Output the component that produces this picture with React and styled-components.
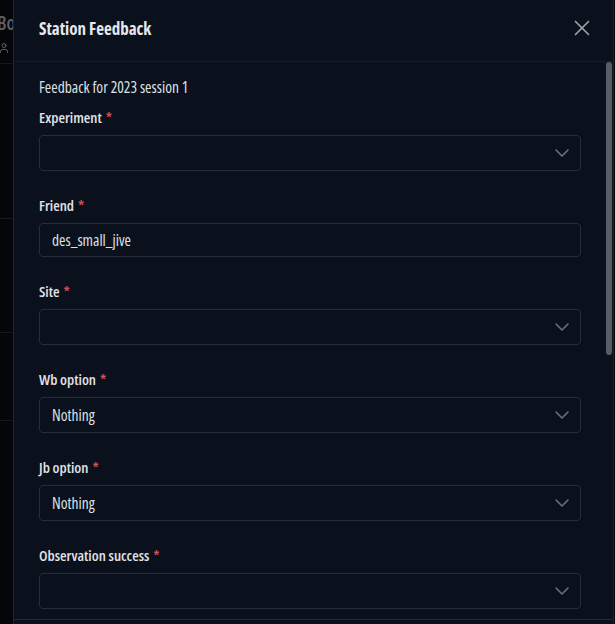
import React from "react";
import styled, { createGlobalStyle } from "styled-components";
import { User, X, ChevronDown } from "lucide-react";

const GlobalStyle = createGlobalStyle`
  html, body {
    margin: 0;
    padding: 0;
    background: #050609;
    overflow: hidden;
  }
  body {
    font-family: "Open Sans", "Noto Sans", sans-serif;
    font-stretch: 87.5%;
  }
`;

const Page = styled.div`
  position: relative;
  width: 615px;
  height: 624px;
  overflow: hidden;
  background: #050609;
`;

const BgList = styled.div`
  display: flex;
  flex-direction: column;
  width: 200px;
  color: #5d6169;
`;

const BgRow = styled.div`
  height: ${(p) => p.$h}px;
  border-bottom: 1px solid #15181e;
  box-sizing: border-box;
  padding: 10px 0 0 0;
`;

const BgTitle = styled.div`
  font-size: 19px;
  font-weight: 600;
  margin-left: -3px;
`;

const BgMeta = styled.div`
  display: flex;
  align-items: center;
  gap: 4px;
  font-size: 13px;
  margin-top: 3px;
  margin-left: -2px;
`;

const Modal = styled.div`
  position: absolute;
  left: 13px;
  top: -1px;
  width: 601px;
  height: 640px;
  box-sizing: border-box;
  background: #0b111c;
  border: 1px solid #1f2530;
  display: flex;
  flex-direction: column;
`;

const Header = styled.div`
  flex: none;
  height: 62px;
  box-sizing: border-box;
  display: flex;
  align-items: center;
  justify-content: space-between;
  padding: 0 18px 0 25px;
  border-bottom: 1px solid #161c27;
`;

const Title = styled.h2`
  margin: 0;
  margin-top: -5px;
  font-size: 17px;
  font-weight: 700;
  color: #e6e8ec;
`;

const CloseButton = styled.button`
  display: flex;
  align-items: center;
  justify-content: center;
  width: 26px;
  height: 26px;
  margin-top: -5px;
  padding: 0;
  border: none;
  background: none;
  color: #9aa0a8;
  cursor: pointer;
`;

const Body = styled.div`
  flex: none;
  height: 557px;
  display: flex;
  overflow: hidden;
`;

const Content = styled.div`
  flex: 1;
  min-width: 0;
  padding: 15px 24px 24px 25px;
`;

const ScrollTrack = styled.div`
  flex: none;
  width: 8px;
  padding: 0 1px 0 1px;
  box-sizing: border-box;
`;

const ScrollThumb = styled.div`
  height: 293px;
  border-radius: 3px;
  background: #575c67;
`;

const Footer = styled.div`
  flex: 1;
  border-top: 1px solid #232a36;
`;

const Intro = styled.p`
  margin: 0 0 10px;
  font-size: 15.5px;
  line-height: 20px;
  color: #dde0e5;
`;

const Field = styled.div`
  display: flex;
  flex-direction: column;
  gap: 8px;
  margin-bottom: 24px;
`;

const Label = styled.label`
  font-size: 15px;
  line-height: 20px;
  font-weight: 600;
  color: #e1e3e7;
`;

const Required = styled.span`
  color: #d0505a;
  margin-left: 4px;
`;

const Box = styled.div`
  height: ${(p) => (p.$input ? 34 : 36)}px;
  box-sizing: border-box;
  border: 1px solid #272d39;
  border-radius: 4px;
  background: #0b111c;
  display: flex;
  align-items: center;
  justify-content: space-between;
  padding: 0 6px 0 12px;
  font-size: 15.5px;
  color: #dde0e5;
`;

const Chevron = styled(ChevronDown)`
  color: #6b717c;
`;

const fields = [
  { label: "Experiment", value: "" },
  { label: "Friend", value: "des_small_jive", input: true },
  { label: "Site", value: "" },
  { label: "Wb option", value: "Nothing" },
  { label: "Jb option", value: "Nothing" },
  { label: "Observation success", value: "" },
];

const FormField = ({ label, value, input }) => (
  <Field>
    <Label>
      {label}
      <Required>*</Required>
    </Label>
    <Box $input={input}>
      <span>{value}</span>
      {!input && <Chevron size={24} strokeWidth={1.6} />}
    </Box>
  </Field>
);

export default function App() {
  return (
    <Page>
      <GlobalStyle />
      <BgList>
        <BgRow $h={64}>
          <BgTitle>Board</BgTitle>
          <BgMeta>
            <User size={12} />
            <span>12</span>
          </BgMeta>
        </BgRow>
        <BgRow $h={155} />
        <BgRow $h={114} />
        <BgRow $h={88} />
      </BgList>
      <Modal>
        <Header>
          <Title>Station Feedback</Title>
          <CloseButton aria-label="Close">
            <X size={26} strokeWidth={1.6} />
          </CloseButton>
        </Header>
        <Body>
          <Content>
            <Intro>Feedback for 2023 session 1</Intro>
            {fields.map((f) => (
              <FormField key={f.label} {...f} />
            ))}
          </Content>
          <ScrollTrack>
            <ScrollThumb />
          </ScrollTrack>
        </Body>
        <Footer />
      </Modal>
    </Page>
  );
}
